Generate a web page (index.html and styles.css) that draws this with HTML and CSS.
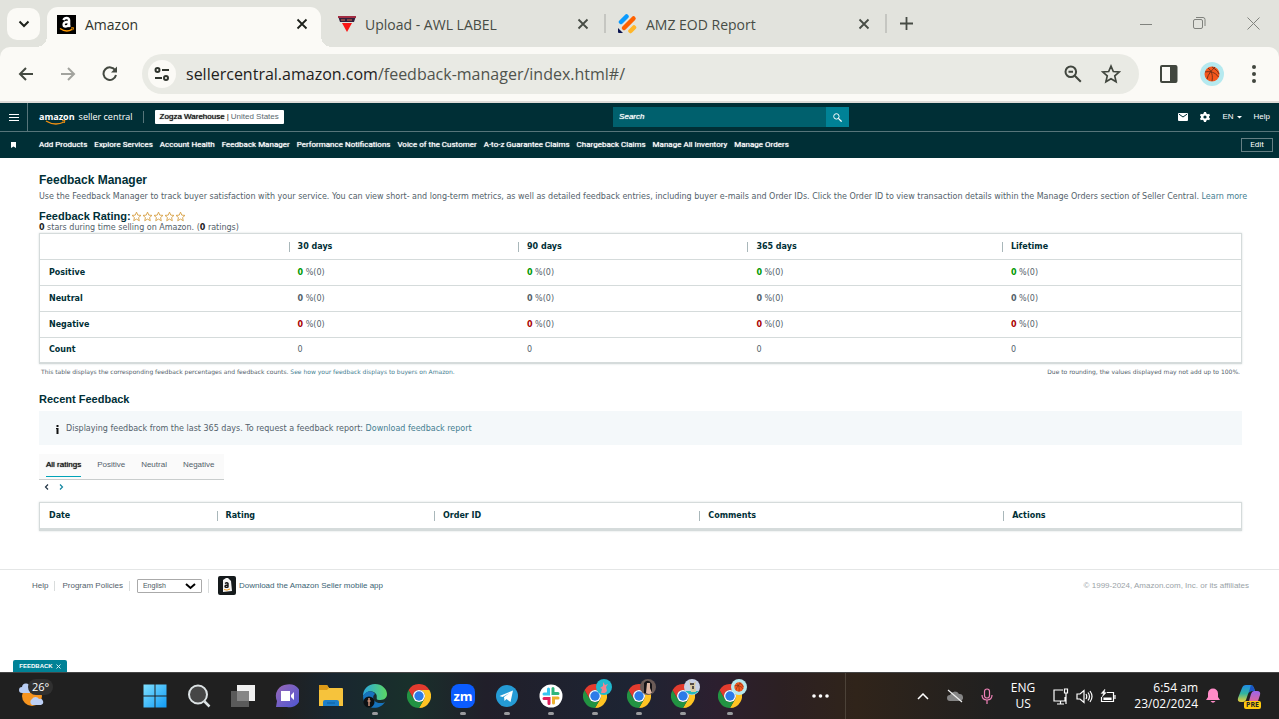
FILE: index.html
```
<!DOCTYPE html>
<html lang="en">
<head>
<meta charset="utf-8">
<title>Amazon</title>
<link rel="stylesheet" href="styles.css">
</head>
<body>
<svg class="defs" aria-hidden="true">
  <symbol id="x" viewBox="0 0 12 12"><path d="M1.5 1.5l9 9m0-9l-9 9" fill="none" stroke="currentColor" stroke-width="1.8"/></symbol>
  <symbol id="chrome" viewBox="0 0 24 24">
    <path fill="#ffc423" d="M12 6H22.4A12 12 0 0 1 12 24L17.2 15A6 6 0 0 0 12 6Z"/>
    <path fill="#229342" d="M12 6H22.4A12 12 0 0 1 12 24L17.2 15A6 6 0 0 0 12 6Z" transform="rotate(120 12 12)"/>
    <path fill="#e33b2e" d="M12 6H22.4A12 12 0 0 1 12 24L17.2 15A6 6 0 0 0 12 6Z" transform="rotate(240 12 12)"/>
    <circle cx="12" cy="12" r="6" fill="#fff"/><circle cx="12" cy="12" r="4.7" fill="#2c7be8"/>
  </symbol>
  <symbol id="ball" viewBox="0 0 16 16">
    <circle cx="8" cy="8" r="7.5" fill="#f4571c"/>
    <path d="M1 6c5-1 10 0 13.500 5M4 2c4 3 5 8 4 13M11 1C8 4 4 8 3 13M8 1c3 2 6 4 7 7" fill="none" stroke="#5c2a18" stroke-width=".8"/>
  </symbol>
  <symbol id="star" viewBox="0 0 24 24"><path d="M12 2.500l2.800 6.500 7 .6-5.300 4.700 1.600 7L12 17.600l-6.100 3.700 1.600-7L2.200 9.600l7-.6z" fill="none" stroke="currentColor" stroke-width="2"/></symbol>
</svg>

<header class="browser">
  <div class="tabstrip">
    <button class="tab-search" aria-label="Search tabs"><svg width="12" height="8" viewBox="0 0 12 8"><path d="M1.500 1.500l4.500 4.500 4.500-4.500" fill="none" stroke="currentColor" stroke-width="2"/></svg></button>
    <div class="tab tab-active">
      <svg width="19" height="19" viewBox="0 0 19 19"><rect width="19" height="19"/><path d="M6.500 5.200Q7.200 3 9.600 3t2.500 2.400v5.200l.8 1.200M12 6.800q-5.400 0-5.400 2.700 0 2 1.900 2 3.500-.2 3.500-4" fill="none" stroke="#fff" stroke-width="2.400"/><path d="M3 13.500q6.500 4.500 12 .8" fill="none" stroke="#f90" stroke-width="1.500"/><path d="M14 13l2.500-.3-.7 2.500" fill="none" stroke="#f90"/></svg>
      <span class="tab-title">Amazon</span>
      <button class="tab-close" aria-label="Close tab"><svg width="12" height="12"><use href="#x"/></svg></button>
    </div>
    <div class="tab tab-second">
      <svg width="18" height="17" viewBox="0 0 18 17"><path d="M0 0h18l-2 6H2z" fill="#32203c"/><path d="M0 1h18" stroke="#a22d42" stroke-width="2"/><path d="M3 4h4m2 0h5" stroke="#d5704c"/><path d="M4 7h10L9 16z" fill="#fa1515"/></svg>
      <span class="tab-title">Upload - AWL LABEL</span>
      <button class="tab-close" aria-label="Close tab"><svg width="12" height="12"><use href="#x"/></svg></button>
    </div>
    <div class="tab tab-third">
      <svg width="19" height="20" viewBox="0 0 19 20" fill="none" stroke-width="4.500" stroke-linecap="round"><path d="M3 8l5.500-5.500" stroke="#0a9bff"/><path d="M6 14l9.500-9.500" stroke="#ff6100"/><path d="M12.500 17l3.500-3.500" stroke="#ffb629"/><path d="M0 14l5 5H1q-1 0-1-1z" fill="#0a1551"/></svg>
      <span class="tab-title">AMZ EOD Report</span>
      <button class="tab-close" aria-label="Close tab"><svg width="12" height="12"><use href="#x"/></svg></button>
    </div>
    <button class="tab-new" aria-label="New tab"><svg width="13" height="13" viewBox="0 0 13 13"><path d="M6.500 0v13M0 6.500h13" stroke="currentColor" stroke-width="1.800"/></svg></button>
    <div class="window-buttons">
      <button aria-label="Minimise"><svg width="12" height="12" viewBox="0 0 12 12"><path d="M0 6.500h12"/></svg></button>
      <button aria-label="Restore"><svg width="13" height="13" viewBox="0 0 13 13"><rect x=".5" y="2.500" width="9" height="9" rx="1.500"/><path d="M3 .5h7q2 0 2 2V9"/></svg></button>
      <button aria-label="Close"><svg width="13" height="13" viewBox="0 0 13 13"><path d="M.5.5l12 12m0-12l-12 12"/></svg></button>
    </div>
  </div>
  <div class="toolbar">
    <button aria-label="Back"><svg width="16" height="14" viewBox="0 0 16 14"><path d="M15 7H2M8 1L2 7l6 6" fill="none" stroke="#444941" stroke-width="2"/></svg></button>
    <button aria-label="Forward"><svg width="16" height="14" viewBox="0 0 16 14"><path d="M1 7h13M8 1l6 6-6 6" fill="none" stroke="#a2a39e" stroke-width="2"/></svg></button>
    <button aria-label="Reload"><svg width="16" height="16" viewBox="0 0 16 16"><path d="M13.300 4.500A6.300 6.300 0 1 0 14 9" fill="none" stroke="#444941" stroke-width="2"/><path d="M15 .5v6H9z" fill="#444941"/></svg></button>
    <div class="omnibox">
      <button class="site-info" aria-label="Site information"><svg width="16" height="14" viewBox="0 0 16 14" fill="none" stroke="#30352e" stroke-width="2"><circle cx="3.500" cy="3" r="2"/><path d="M8 3h7M1 11h7"/><circle cx="12" cy="11" r="2"/></svg></button>
      <span class="url">sellercentral.amazon.com<span class="url-path">/feedback-manager/index.html#/</span></span>
      <button aria-label="Zoom"><svg width="18" height="18" viewBox="0 0 18 18" fill="none" stroke="#41463e" stroke-width="2"><circle cx="6.800" cy="6.800" r="5.300"/><path d="M10.800 10.800l6 6M4.500 6.800H9"/></svg></button>
      <button class="bookmark" aria-label="Bookmark"><svg width="20" height="20" color="#41463e"><use href="#star"/></svg></button>
    </div>
    <button aria-label="Side panel"><svg width="18" height="18" viewBox="0 0 18 18"><rect x="1" y="1" width="15.500" height="16" rx="1" fill="none" stroke="#41463e" stroke-width="2"/><path d="M10 1h6v16h-6z" fill="#41463e"/></svg></button>
    <button class="profile" aria-label="Profile"><svg width="16" height="16"><use href="#ball"/></svg></button>
    <button aria-label="Menu"><svg width="4" height="18" viewBox="0 0 4 18" fill="#41463e"><circle cx="2" cy="2" r="2"/><circle cx="2" cy="9" r="2"/><circle cx="2" cy="16" r="2"/></svg></button>
  </div>
</header>

<div class="seller-header">
  <div class="top-row">
    <button class="menu-button" aria-label="Menu"><svg width="10" height="7" viewBox="0 0 10 7"><path d="M0 .5h10M0 3.500h10M0 6.500h10" stroke="#fff"/></svg></button>
    <a class="logo" href="#"><span class="logo-name"><b>amazon</b><svg class="smile" width="22" height="5" viewBox="0 0 22 5"><path d="M1 1q9 5.500 18 1" fill="none" stroke="#f29111" stroke-width="1.300"/><path d="M17 .8l3-.3-.8 2.500" fill="none" stroke="#f29111"/></svg></span>seller central</a>
    <button class="store"><b>Zogza Warehouse</b> | <span>United States</span></button>
    <form class="search">
      <input type="text" aria-label="Search" placeholder="Search">
      <button type="button" aria-label="Submit search"><svg width="9" height="9" viewBox="0 0 9 9" fill="none" stroke="#fff"><circle cx="3.400" cy="3.400" r="2.700"/><path d="M5.400 5.400l3.200 3.200" stroke-width="1.300"/></svg></button>
    </form>
    <div class="header-tools">
      <button aria-label="Messages"><svg width="10" height="8" viewBox="0 0 10 8"><rect width="10" height="8" rx="1" fill="#fff"/><path d="M1 1.200L5 4l4-2.800" fill="none" stroke="#002f36"/></svg></button>
      <button aria-label="Settings"><svg width="10" height="10" viewBox="0 0 10 10"><path d="M4 0h2l.4 1.500 1.400.7L9.200 1.800l.8 1.600L9 4.500v1l1 1.100-.8 1.600-1.400-.4-1.400.7L6 10H4l-.4-1.500-1.400-.7-1.400.4L0 6.600l1-1.100v-1L0 3.400l.8-1.600 1.400.4 1.400-.7z" fill="#fff"/><circle cx="5" cy="5" r="1.600" fill="#002f36"/></svg></button>
      <button>EN <svg width="5" height="3" viewBox="0 0 5 3"><path d="M0 0h5L2.500 2.500z" fill="#fff"/></svg></button>
      <a href="#">Help</a>
    </div>
  </div>
  <nav class="nav-row">
    <svg class="nav-mark" width="5" height="6" viewBox="0 0 5 6"><path d="M0 0h5v6L2.500 4.500 0 6z" fill="#fff"/></svg>
    <a href="#">Add Products</a><a href="#">Explore Services</a><a href="#">Account Health</a><a href="#">Feedback Manager</a><a href="#">Performance Notifications</a><a href="#">Voice of the Customer</a><a href="#">A-to-z Guarantee Claims</a><a href="#">Chargeback Claims</a><a href="#">Manage All Inventory</a><a href="#">Manage Orders</a>
    <button class="edit">Edit</button>
  </nav>
</div>

<div class="page">
  <main>
    <h1>Feedback Manager</h1>
    <p class="intro">Use the Feedback Manager to track buyer satisfaction with your service. You can view short- and long-term metrics, as well as detailed feedback entries, including buyer e-mails and Order IDs. Click the Order ID to view transaction details within the Manage Orders section of Seller Central. <a href="#">Learn more</a></p>
    <h2 class="rating">Feedback Rating: <span class="stars"><svg><use href="#star"/></svg><svg><use href="#star"/></svg><svg><use href="#star"/></svg><svg><use href="#star"/></svg><svg><use href="#star"/></svg></span></h2>
    <p class="summary"><b>0</b> stars during time selling on Amazon. (<b>0</b> ratings)</p>
    <table class="grid ratings">
      <colgroup><col class="r1"><col class="r2"><col class="r3"><col class="r4"><col></colgroup>
      <thead><tr><td></td><th scope="col">30 days</th><th scope="col">90 days</th><th scope="col">365 days</th><th scope="col">Lifetime</th></tr></thead>
      <tbody>
        <tr class="positive"><th scope="row">Positive</th><td><b>0</b> %(0)</td><td><b>0</b> %(0)</td><td><b>0</b> %(0)</td><td><b>0</b> %(0)</td></tr>
        <tr class="neutral"><th scope="row">Neutral</th><td><b>0</b> %(0)</td><td><b>0</b> %(0)</td><td><b>0</b> %(0)</td><td><b>0</b> %(0)</td></tr>
        <tr class="negative"><th scope="row">Negative</th><td><b>0</b> %(0)</td><td><b>0</b> %(0)</td><td><b>0</b> %(0)</td><td><b>0</b> %(0)</td></tr>
        <tr class="count"><th scope="row">Count</th><td>0</td><td>0</td><td>0</td><td>0</td></tr>
      </tbody>
    </table>
    <div class="notes"><span>This table displays the corresponding feedback percentages and feedback counts. <a href="#">See how your feedback displays to buyers on Amazon.</a></span><span>Due to rounding, the values displayed may not add up to 100%.</span></div>
    <h2>Recent Feedback</h2>
    <div class="notice"><svg width="3" height="9" viewBox="0 0 3 9"><path d="M.5 0h2v2h-2zM0 3h2.500v6h-2V4H0z" fill="#111"/></svg><p>Displaying feedback from the last 365 days. To request a feedback report: <a href="#">Download feedback report</a></p></div>
    <div class="filters"><button class="selected">All ratings</button><button>Positive</button><button>Neutral</button><button>Negative</button></div>
    <div class="pager"><button aria-label="Previous page"><svg width="5" height="6" viewBox="0 0 5 6"><path d="M4 .5L1.500 3 4 5.500" fill="none" stroke="#234" stroke-width="1.200"/></svg></button><button aria-label="Next page"><svg width="5" height="6" viewBox="0 0 5 6"><path d="M1 .5L3.500 3 1 5.500" fill="none" stroke="#1286a0" stroke-width="1.200"/></svg></button></div>
    <table class="grid entries">
      <colgroup><col class="e1"><col class="e2"><col class="e3"><col class="e4"><col></colgroup>
      <thead><tr><th scope="col">Date</th><th scope="col">Rating</th><th scope="col">Order ID</th><th scope="col">Comments</th><th scope="col">Actions</th></tr></thead>
    </table>
  </main>
  <footer>
    <a href="#">Help</a><a href="#">Program Policies</a>
    <span class="language"><select aria-label="Language"><option>English</option></select><svg width="11" height="7" viewBox="0 0 11 7"><path d="M1 1l4.500 4L10 1" fill="none" stroke="#000" stroke-width="2"/></svg></span>
    <a class="app-link" href="#"><svg width="18" height="19" viewBox="0 0 18 19"><rect width="18" height="19" rx="2" fill="#151a1c"/><path d="M5 4l3-2h2l3 3 1 10-9 1z" fill="#f5f5f5"/><path d="M7 7.500q2-1.500 3 0v4M10 9q-3 0-3 1.500t3 .5" fill="none" stroke="#111" stroke-width="1.400"/><path d="M6 13.500q3 1.500 6-.5" fill="none" stroke="#f5a22a"/></svg>Download the Amazon Seller mobile app</a>
    <small>© 1999-2024, Amazon.com, Inc. or its affiliates</small>
  </footer>
  <button class="feedback">FEEDBACK <svg width="5" height="5" viewBox="0 0 5 5"><path d="M.5.5l4 4m0-4l-4 4" stroke="#d5f0f3"/></svg></button>
</div>

<div class="taskbar">
  <button class="weather" aria-label="Weather">
    <svg width="26" height="26" viewBox="0 0 26 26"><circle cx="13" cy="13" r="10" fill="#f6941f"/><path d="M3 10a3 3 0 0 1 0-6 4 4 0 0 1 8 1v5z" fill="#b9cdf3"/><path d="M13 22a3.500 3.500 0 0 1 0-6 4 4 0 0 1 7 0 3 3 0 0 1 2 6z" fill="#bdd0f5"/></svg>
    <span>26°</span>
  </button>
  <div class="apps">
    <button aria-label="Start"><svg viewBox="0 0 24 24"><defs><linearGradient id="w" x2="1" y2="1"><stop stop-color="#7fe0ff"/><stop offset="1" stop-color="#109bf5"/></linearGradient></defs><path d="M.5.500H11.500V11.500H.5zM12.500.5h11v11h-11zM.5 12.500h11v11H.5zM12.500 12.500h11v11h-11z" fill="url(#w)"/></svg></button>
    <button aria-label="Search"><svg viewBox="0 0 24 24"><circle cx="11" cy="10.500" r="9" fill="#464646" stroke="#dce2e4" stroke-width="2"/><path d="M17.500 17.500l5 5" stroke="#dce2e4" stroke-width="2.500"/></svg></button>
    <button aria-label="Task view"><svg viewBox="0 0 24 24"><path d="M6 1h18v16H6z" fill="#f0f0f0"/><path d="M0 7h18v16H0z" fill="#6a6a6a" opacity=".8"/></svg></button>
    <button aria-label="Chat"><svg viewBox="0 0 24 24"><defs><linearGradient id="c" x2="1" y2="1"><stop stop-color="#9a68b6"/><stop offset="1" stop-color="#4a55d4"/></linearGradient></defs><path d="M12 .5A11.500 11.500 0 1 1 12 23H1l1-6A11.500 11.500 0 0 1 12 .5z" fill="url(#c)"/><path d="M6 7h9v10H6zM16 11l3-3v8l-3-3z" fill="#fff"/></svg></button>
    <button aria-label="File Explorer"><svg viewBox="0 0 24 24"><path d="M0 2q0-1 1-1h7l2 3h13q1 0 1 1v17H0z" fill="#f6c33c"/><path d="M0 2q0-1 1-1h7l2 3-2 2H0z" fill="#dd9a17"/><path d="M4 22v-4q0-2 2-2h12q2 0 2 2v4z" fill="#1d7ec9"/><path d="M8 19h8" stroke="#0d5ea0"/></svg></button>
    <button class="running" aria-label="Edge"><svg viewBox="0 0 24 24"><defs><linearGradient id="e" x2="1"><stop stop-color="#2aa6e0"/><stop offset="1" stop-color="#5bd862"/></linearGradient></defs><path d="M0 12C0 5 5 0 12 0s12 5 12 10-4 6-8 6c-4 0-1-3-3-6-3-4-9-4-13 2z" fill="url(#e)"/><path d="M0 12C3 6 10 6 12 10c-4 3-1 9 5 9 2 0 4 0 5-1-5 9-22 8-22-6z" fill="#1673bd"/><circle cx="6" cy="18" r="5.500" fill="#0c1114"/><path d="M6 14v8M4.500 17h3" stroke="#c99078" stroke-width="1.500"/></svg></button>
    <button aria-label="Chrome"><svg viewBox="0 0 24 24"><use href="#chrome"/></svg></button>
    <button class="running zoom" aria-label="Zoom">zm</button>
    <button class="running" aria-label="Telegram"><svg viewBox="0 0 24 24"><circle cx="12" cy="12" r="11" fill="#259bd5"/><path d="M4.500 12L18 6.500 15.500 18l-4-3-2 2-.5-4 5.500-4-7 4z" fill="#fff"/></svg></button>
    <button class="running" aria-label="Slack"><svg viewBox="0 0 24 24" fill="none" stroke-width="3" stroke-linecap="round"><circle cx="12" cy="12" r="11.500" fill="#fff"/><path d="M9.500 5v5H5" stroke="#36c5f0"/><path d="M14 4.500v5h5" stroke="#2eb67d"/><path d="M14.500 19v-5H19" stroke="#ecb22e"/><path d="M10 19.500v-5H5" stroke="#e01e5a"/></svg></button>
    <button class="running" aria-label="Chrome profile 1"><svg viewBox="0 0 24 24"><use href="#chrome"/></svg><svg class="badge" viewBox="0 0 16 16"><circle cx="8" cy="8" r="8" fill="#20b8ce"/><path d="M7 3l2 3 3-1-2 3 1 4-2 2H5l1-4-2-1 3-2z" fill="#ef8590"/></svg></button>
    <button class="running" aria-label="Chrome profile 2"><svg viewBox="0 0 24 24"><use href="#chrome"/></svg><svg class="badge" viewBox="0 0 16 16"><circle cx="8" cy="8" r="8" fill="#6b5b57"/><path d="M4 14V4q4-5 8 1v10z" fill="#151317"/><path d="M7 4h3v5l2 5q-3 2-6 0z" fill="#dfb8a5"/></svg></button>
    <button class="running" aria-label="Chrome profile 3"><svg viewBox="0 0 24 24"><use href="#chrome"/></svg><svg class="badge" viewBox="0 0 16 16"><circle cx="8" cy="8" r="8" fill="#c8d2e6"/><path d="M1 12h14q-7 7-14 0z" fill="#24b9bd"/><path d="M5 1l2 3h3l2-2-1 5 1 6H7l-1-6z" fill="#d8caa0"/><path d="M6 5h4M9 7v3" stroke="#29252d" stroke-width="1.500"/></svg></button>
    <button class="running last" aria-label="Chrome profile 4"><svg viewBox="0 0 24 24"><use href="#chrome"/></svg><svg class="badge" viewBox="0 0 16 16"><circle cx="8" cy="8" r="8" fill="#b5e9ef"/><use href="#ball" x="3" y="3" width="10" height="10"/></svg></button>
  </div>
  <button class="overflow" aria-label="More apps"><svg width="17" height="4" viewBox="0 0 17 4" fill="#fff"><circle cx="2" cy="2" r="1.800"/><circle cx="8.500" cy="2" r="1.800"/><circle cx="15" cy="2" r="1.800"/></svg></button>
  <div class="tray">
    <button aria-label="Hidden icons"><svg width="12" height="7" viewBox="0 0 12 7"><path d="M1 6l5-5 5 5" fill="none" stroke="#fff" stroke-width="1.500"/></svg></button>
    <button aria-label="OneDrive"><svg width="16" height="14" viewBox="0 0 16 14"><path d="M3 12a3 3 0 0 1 0-6 5 5 0 0 1 9-1 3.500 3.500 0 0 1 1 7z" fill="#858585"/><path d="M1 1l14 12" stroke="#eee" stroke-width="1.200"/></svg></button>
    <button aria-label="Microphone"><svg width="12" height="17" viewBox="0 0 12 17" fill="none" stroke="#f082b8" stroke-width="1.200"><rect x="3.500" y="1" width="5" height="9" rx="2.500"/><path d="M1 7q0 5 5 5t5-5M6 12v4"/></svg></button>
    <button class="keyboard">ENG<br>US</button>
    <button class="system" aria-label="Network, volume and battery"><svg width="16" height="17" viewBox="0 0 16 17" fill="none" stroke="#fff" stroke-width="1.200"><path d="M10 2H1v11h11V9M4 16h7M7.500 13v3M11.500 1h3v4h-3zM13 5v11"/></svg><svg width="17" height="15" viewBox="0 0 17 15" fill="none" stroke="#fff" stroke-width="1.200"><path d="M1 5h3l4-3.500v12L4 10H1zM10 5q1.500 2.500 0 5M12 3.500q3 4 0 8M14 2q4 5.500 0 11"/></svg><svg width="16" height="14" viewBox="0 0 16 14" fill="none" stroke="#fff" stroke-width="1.200"><path d="M7 3.500h6.500v9h-12V8M15 6v4"/><path d="M4 9h7v1.500H4z" fill="#fff"/><path d="M5 0L1 4.500h2.500L2 8l4.500-4.500H4.500z" fill="#fff" stroke-width=".3"/></svg></button>
    <button class="clock">6:54 am<br>23/02/2024</button>
    <button aria-label="Notifications"><svg width="14" height="16" viewBox="0 0 14 16" fill="#ff8cc8"><path d="M0 12l2-3V5.500a5 5 0 0 1 10 0V9l2 3zM4.500 13h5q-2.500 3.500-5 0z"/></svg></button>
    <button class="copilot" aria-label="Copilot preview"><svg width="24" height="23" viewBox="0 0 24 23"><defs><linearGradient id="k" x2="0" y2="1"><stop stop-color="#208be7"/><stop offset=".5" stop-color="#31b5a0"/><stop offset="1" stop-color="#f1d033"/></linearGradient><linearGradient id="l" x2="0" y2="1"><stop stop-color="#9a65ed"/><stop offset="1" stop-color="#ef6783"/></linearGradient></defs><path d="M5 3q1-3 4-3h5q2 0 3 3l1 3h-3q-3 0-4 3l-2 6q-1 2-3 2H4q-4 0-3-4z" fill="url(#k)"/><path d="M14 0q2 0 3 3l1 3h-3q-2 0-3.500 2z" fill="#1b55c4"/><path d="M17 6h3q4 0 3 4l-2 6q-1 3-4 3H9q2 0 3-3l2-7q1-3 3-3z" fill="url(#l)"/></svg><span>PRE</span></button>
  </div>
</div>
</body>
</html>
```
FILE: styles.css
```
* { box-sizing: border-box; }
body {
  margin: 0;
  min-height: 100vh;
  display: flex;
  flex-direction: column;
  background: #fff;
  color: #53616a;
  font: 8px/10px "DejaVu Sans", sans-serif;
}
button {
  display: flex;
  align-items: center;
  justify-content: center;
  border: 0;
  padding: 0;
  background: none;
  color: inherit;
  font: inherit;
}
svg { display: block; flex: none; }
a { text-decoration: none; color: inherit; }
h1, h2, p { margin: 0; }
.defs { position: absolute; width: 0; height: 0; }

/* Browser */
.browser { background: #e2e3dd; font: 14px/20px "Open Sans", sans-serif; border-bottom: 2px solid #dedcd8; }
.tabstrip { height: 47px; display: flex; align-items: center; color: #474c45; }
.tab-search { width: 33px; height: 32px; margin-left: 7px; border-radius: 10px; background: #fbfaf6; color: #1d211b; }
.tab { height: 40px; align-self: flex-end; display: flex; align-items: center; gap: 9px; padding: 0 13px 6px 10px; position: relative; }
.tab-title { flex: 1; padding-top: 1px; }
.tab-active { width: 274px; margin-left: 7px; border-radius: 11px 11px 0 0; background: #fbfaf6; color: #30352e; }
.tab-active::before, .tab-active::after { content: ""; position: absolute; bottom: 0; width: 11px; height: 11px; }
.tab-active::before { right: 100%; background: radial-gradient(circle at 0 0, transparent 11px, #fbfaf6 11px); }
.tab-active::after { left: 100%; background: radial-gradient(circle at 100% 0, transparent 11px, #fbfaf6 11px); }
.tab-active .tab-close { color: #1d211b; }
.tab-second { width: 281px; padding-left: 17px; }
.tab-third { width: 281px; padding-left: 16px; }
.tab-second::after, .tab-third::after { content: ""; position: absolute; right: -4px; top: 7px; width: 2px; height: 19px; background: #c5c6c1; }
.tab-new { margin-left: 17px; }
.window-buttons { margin-left: auto; padding-right: 19px; display: flex; gap: 41px; fill: none; stroke: #80827d; }
.toolbar { height: 54px; display: flex; align-items: center; gap: 26px; padding: 0 23px 0 18px; border-radius: 10px 10px 0 0; background: #fbfaf6; }
.omnibox { flex: 1; height: 40px; margin: 0 -5px 0 -2px; padding: 0 18px 0 6px; display: flex; align-items: center; border-radius: 20px; background: #e9eae4; }
.site-info { width: 28px; height: 28px; border-radius: 50%; background: #fbfaf6; }
.url { flex: 1; padding-left: 10px; font-size: 16px; color: #1e211c; }
.url-path { color: #50544d; }
.bookmark { margin-left: 19px; }
.profile { width: 24px; height: 24px; margin: 0 2px 0 -4px; border-radius: 50%; background: #b5e9ef; }

/* Seller Central header */
.seller-header { background: #002f36; color: #fff; font: 8px/10px "Liberation Sans", sans-serif; }
.top-row { height: 29px; display: flex; align-items: center; border-bottom: 1px solid #57757a; }
.menu-button { width: 28px; align-self: stretch; border-right: 1px solid #57757a; padding-left: 1px; }
.logo { display: flex; gap: 4px; margin-left: 11px; padding-right: 10px; border-right: 1px solid #57757a; font: 9px/12px "Open Sans", sans-serif; }
.logo-name { position: relative; }
.smile { position: absolute; left: 6px; top: 9px; }
.store { height: 14px; margin-left: 11px; padding: 0 5px; gap: 2px; border-radius: 1px; background: #fff; color: #111; }
.store b { font-weight: 400; text-shadow: 0 0 1px #111; }
.store span { color: #59696e; }
.search { width: 236px; height: 20px; margin: 0 auto; display: flex; }
.search input { flex: 1; min-width: 0; border: 0; padding: 0 6px; background: #00606d; color: #fff; font: italic 8px/10px "Liberation Sans", sans-serif; }
.search input::placeholder { color: #fff; text-shadow: 0 0 1px #fff; }
.search button { width: 23px; background: #008296; }
.header-tools { display: flex; align-items: center; gap: 12px; padding-right: 9px; }
.header-tools button { gap: 3px; }
.nav-row { height: 26px; display: flex; align-items: center; gap: 7px; padding: 0 6px 0 11px; font-family: Roboto, sans-serif; text-shadow: 0 0 1px #fff; }
.nav-mark { margin-right: 16px; }
.edit { width: 32px; height: 14px; margin-left: auto; border: 1px solid #657f83; }

/* Page */
.page { flex: 1; position: relative; }
main { padding: 15px 37px 38px 39px; }
h1, h2 { font: bold 11px/14px "Liberation Sans", sans-serif; color: #002f36; }
h1 { font-size: 12px; }
.intro { margin-top: 5px; white-space: nowrap; }
main a { color: #457e91; }
.rating { display: flex; align-items: center; margin-top: 7px; }
.stars { display: flex; color: #d8a247; }
.stars svg { width: 11px; height: 11px; }
.summary b { color: #222; }
.grid { width: 100%; table-layout: fixed; border-collapse: separate; border-spacing: 0; border: 1px solid #d5dbdb; border-bottom-width: 2px; box-shadow: 0 0 2px #d5dbdb; }
.grid th, .grid td { height: 26px; padding: 0 9px; text-align: left; }
.grid thead th, .grid thead td, .grid .count th, .grid .count td { height: 25px; }
.grid th { color: #002f36; }
.grid tbody th, .grid tbody td { border-top: 1px solid #d5dbdb; }
.grid thead th { background: linear-gradient(#a9b7ba, #a9b7ba) 0 50% / 1px 10px no-repeat; }
.entries thead th:first-child { background: none; }
.grid.entries { border-bottom-width: 3px; }
.r1 { width: 20.7%; } .r2, .r3 { width: 19.1%; } .r4 { width: 21.2%; }
.e1 { width: 14.7%; } .e2 { width: 18.1%; } .e3 { width: 22.1%; } .e4 { width: 25.3%; }
.positive b { color: #090; } .negative b { color: #a00; }
.notes { display: flex; justify-content: space-between; margin: 3px 2px 15px; font-size: 6px; line-height: 10px; }
.notice { height: 34px; margin-top: 5px; padding: 2px 17px 0; display: flex; align-items: center; gap: 7px; background: #f4f8fa; }
.filters { width: max-content; height: 26px; margin-top: 9px; padding: 0 9px 0 7px; display: flex; gap: 16px; background: #fafafa; border-bottom: 1px solid #c9cdcd; font-family: "Liberation Sans", sans-serif; }
.filters button { height: 23px; border-bottom: 1px solid transparent; }
.filters .selected { border-color: #00a3b8; color: #111; text-shadow: 0 0 1px #111; }
.pager { display: flex; gap: 10px; padding: 4px 5px 12px; }
footer { display: flex; align-items: center; height: 32px; padding: 0 30px 0 32px; border-top: 1px solid #e4e6e6; font-family: "Liberation Sans", sans-serif; }
footer > a:not(.app-link) { padding-right: 6px; margin-right: 7px; border-right: 1px solid #d9dcdc; }
.language { position: relative; padding-right: 6px; border-right: 1px solid #d9dcdc; }
.language select { appearance: none; width: 65px; height: 14px; border: 1px solid #aaa; border-radius: 1px; padding: 0 5px; background: #fff; color: #4b5a62; font: 7px/9px "Liberation Sans", sans-serif; }
.language svg { position: absolute; right: 12px; top: 4px; pointer-events: none; }
.app-link { display: flex; align-items: center; gap: 3px; margin-left: 9px; color: #3b6474; }
footer small { margin-left: auto; font-size: 8px; color: #9aa3a7; }
.feedback { position: absolute; left: 13px; bottom: 0; width: 54px; height: 12px; gap: 3px; border-radius: 2px 2px 0 0; background: #008296; color: #fff; font: bold 6px/8px "Liberation Sans", sans-serif; }

/* Taskbar */
.taskbar { height: 47px; display: flex; align-items: center; border-top: 1px solid #454545; color: #fff; font: 11px/16px "Open Sans", sans-serif; background: linear-gradient(90deg, #202020 0 22%, #192630 26%, #19302b 32%, #211f2a 38%, #1d2433 49%, #2c1f2f 56%, #2c2023 61%, #30241a 67%, #202020 78%); }
.weather { position: relative; margin-left: 19px; }
.weather span { position: absolute; left: 9px; top: -4px; padding: 0 4px; border-radius: 8px; background: #303030; }
.apps { display: flex; gap: 20px; margin-left: 98px; }
.apps button { position: relative; width: 24px; height: 24px; }
.apps svg { width: 24px; height: 24px; }
.apps .last { margin-left: 3px; }
.running::after { content: ""; position: absolute; bottom: -7px; left: 9px; width: 6px; height: 3px; border-radius: 2px; background: #9a9a9e; }
.apps .badge { position: absolute; left: 13px; top: -5px; width: 16px; height: 16px; }
.apps .zoom { border-radius: 8px; background: #0b5cff; font-weight: 700; font-size: 13px; }
.overflow { margin-left: 70px; }
.tray { flex: 1; align-self: stretch; display: flex; align-items: center; justify-content: flex-end; margin-left: 16px; padding-right: 18px; gap: 18px; border-left: 1px solid #4c4238; }
.keyboard, .clock { font-size: 12px; }
.system { gap: 7px; }
.clock { text-align: right; }
.tray .clock + button { margin-left: -10px; }
.tray .copilot { position: relative; margin-left: -1px; }
.copilot span { position: absolute; right: 0; bottom: -1px; padding: 0 2px; border-radius: 2px; background: #ffc90e; color: #222; font: bold 7px/8px "Open Sans", sans-serif; }
```
